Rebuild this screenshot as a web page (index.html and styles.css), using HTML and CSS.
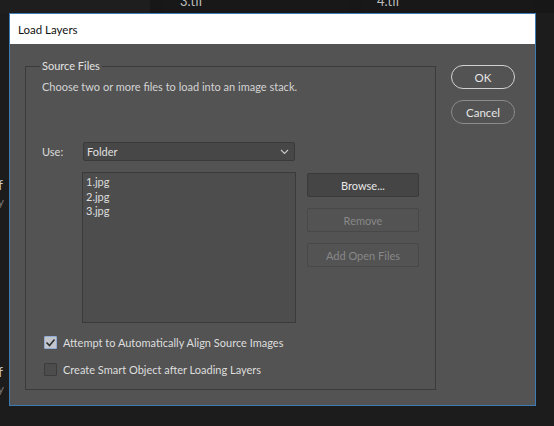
FILE: index.html
```html
<!DOCTYPE html>
<html lang="en">
<head>
  <meta charset="UTF-8" />
  <title>Load Layers</title>
  <link rel="stylesheet" href="styles.css">
</head>
<body>

  <!-- Photoshop workspace behind the dialog -->
  <div class="desk">
    <div class="desk-top">
      <div class="thumb t1"></div>
      <div class="thumb t2"><span>3.tif</span></div>
      <div class="thumb t3"><span>4.tif</span></div>
    </div>
    <div class="desk-side s1"><b>f</b><i>ay</i></div>
    <div class="desk-side s2"><b>f</b><i>ay</i></div>
  </div>

  <!-- Dialog -->
  <div class="dialog">
    <div class="titlebar">Load Layers</div>
    <div class="dialog-body">
      <fieldset class="group">
        <legend>Source Files</legend>
        <p class="hint">Choose two or more files to load into an image stack.</p>

        <div class="use-row">
          <span class="label">Use:</span>
          <div class="select">
            <span>Folder</span>
            <svg width="9" height="6" viewBox="0 0 9 6"><path d="M1 1l3.5 3.5L8 1" fill="none" stroke="#c8c8c8" stroke-width="1.1"/></svg>
          </div>
        </div>

        <div class="files-row">
          <ul class="file-list">
            <li>1.jpg</li>
            <li>2.jpg</li>
            <li>3.jpg</li>
          </ul>
          <div class="file-buttons">
            <button class="btn">Browse...</button>
            <button class="btn disabled">Remove</button>
            <button class="btn disabled">Add Open Files</button>
          </div>
        </div>

        <label class="check">
          <span class="box on">
            <svg width="11" height="9" viewBox="0 0 11 9"><path d="M1.5 4.5l3 3L9.5 1.5" fill="none" stroke="#2e2e2e" stroke-width="1.6"/></svg>
          </span>
          Attempt to Automatically Align Source Images
        </label>
        <label class="check">
          <span class="box"></span>
          Create Smart Object after Loading Layers
        </label>
      </fieldset>

      <div class="side">
        <button class="pill primary">OK</button>
        <button class="pill">Cancel</button>
      </div>
    </div>
  </div>

</body>
</html>
```

FILE: styles.css
```css
* {
  box-sizing: border-box;
  margin: 0;
  padding: 0;
}

html, body {
  width: 554px;
  height: 426px;
  overflow: hidden;
  background: #1c1c1c;
  font-family: Lato, "Noto Sans", sans-serif;
  font-size: 11px;
}

/* workspace */
.desk {
  position: relative;
  width: 554px;
  height: 426px;
}

.desk-top {
  display: flex;
  height: 13px;
  background: #171717;
}

.thumb {
  height: 13px;
  background: #1e1e1e;
  color: #bdbdbd;
  font-size: 13px;
  line-height: 2px;
  overflow: hidden;
}

.thumb span {
  display: block;
}

.t1 { width: 150px; margin-right: 15px; }
.t2 { width: 182px; margin-right: 15px; padding-left: 15px; background: #181818; }
.t3 { width: 170px; padding-left: 15px; background: #181818; }

.desk-side {
  position: absolute;
  left: -2px;
  width: 12px;
  display: flex;
  flex-direction: column;
  color: #c9c9c9;
}

.desk-side b {
  font-weight: normal;
  font-size: 14px;
  line-height: 18px;
}

.desk-side i {
  font-style: normal;
  color: #777;
  font-size: 12px;
  line-height: 16px;
  margin-left: -6px;
}

.s1 { top: 176px; }
.s2 { top: 363px; }

/* dialog */
.dialog {
  position: absolute;
  left: 9px;
  top: 13px;
  width: 527px;
  height: 393px;
  border: 1px solid #3d7bb5;
  background: #535353;
  display: flex;
  flex-direction: column;
}

.titlebar {
  height: 30px;
  background: #ffffff;
  color: #111;
  font-size: 11.5px;
  padding-left: 8px;
  display: flex;
  align-items: center;
}

.dialog-body {
  flex: 1;
  display: flex;
  padding: 15px 0 0 15px;
  gap: 15px;
}

.group {
  width: 411px;
  height: 331px;
  border: 1px solid #3b3b3b;
  padding: 0 16px;
  color: #dcdcdc;
}

.group legend {
  padding: 0 2px;
  margin-left: -2px;
  color: #e2e2e2;
  line-height: 14px;
}

.hint {
  margin-top: 7px;
  color: #d4d4d4;
}

.use-row {
  display: flex;
  align-items: center;
  margin-top: 49px;
}

.label {
  width: 41px;
}

.select {
  width: 212px;
  height: 19px;
  background: #474747;
  border: 1px solid #3a3a3a;
  border-radius: 2px;
  display: flex;
  align-items: center;
  justify-content: space-between;
  padding: 0 5px 0 3px;
  color: #e0e0e0;
}

.files-row {
  display: flex;
  margin-top: 11px;
  margin-left: 40px;
  gap: 11px;
}

.file-list {
  list-style: none;
  width: 214px;
  height: 151px;
  background: #4d4d4d;
  border: 1px solid #3a3a3a;
  padding: 2px 3px;
  color: #dedede;
  line-height: 14.5px;
}

.file-buttons {
  display: flex;
  flex-direction: column;
  gap: 11px;
  padding-top: 1px;
}

.btn {
  width: 112px;
  height: 24px;
  font-family: inherit;
  font-size: 11px;
  background: #454545;
  border: 1px solid #3a3a3a;
  border-radius: 2px;
  color: #e8e8e8;
}

.btn.disabled {
  background: #535353;
  border-color: #484848;
  color: #888;
}

.check {
  display: flex;
  align-items: center;
  gap: 6px;
  margin-left: 2px;
  color: #dedede;
}

.files-row + .check {
  margin-top: 13px;
}

.check + .check {
  margin-top: 14px;
}

.box {
  width: 13px;
  height: 13px;
  border: 1px solid #3c3c3c;
  background: #4c4c4c;
  border-radius: 1px;
  display: flex;
  align-items: center;
  justify-content: center;
}

.box.on {
  background: #c2c6cc;
  border-color: #90acd4;
}

.side {
  display: flex;
  flex-direction: column;
  gap: 11px;
  margin-top: 6px;
}

.pill {
  width: 64px;
  height: 24px;
  border-radius: 12px;
  background: #535353;
  border: 1px solid #8c8c8c;
  color: #e6e6e6;
  font-family: inherit;
  font-size: 11.5px;
}

.pill.primary {
  border: 1.5px solid #d2d2d2;
}
```
